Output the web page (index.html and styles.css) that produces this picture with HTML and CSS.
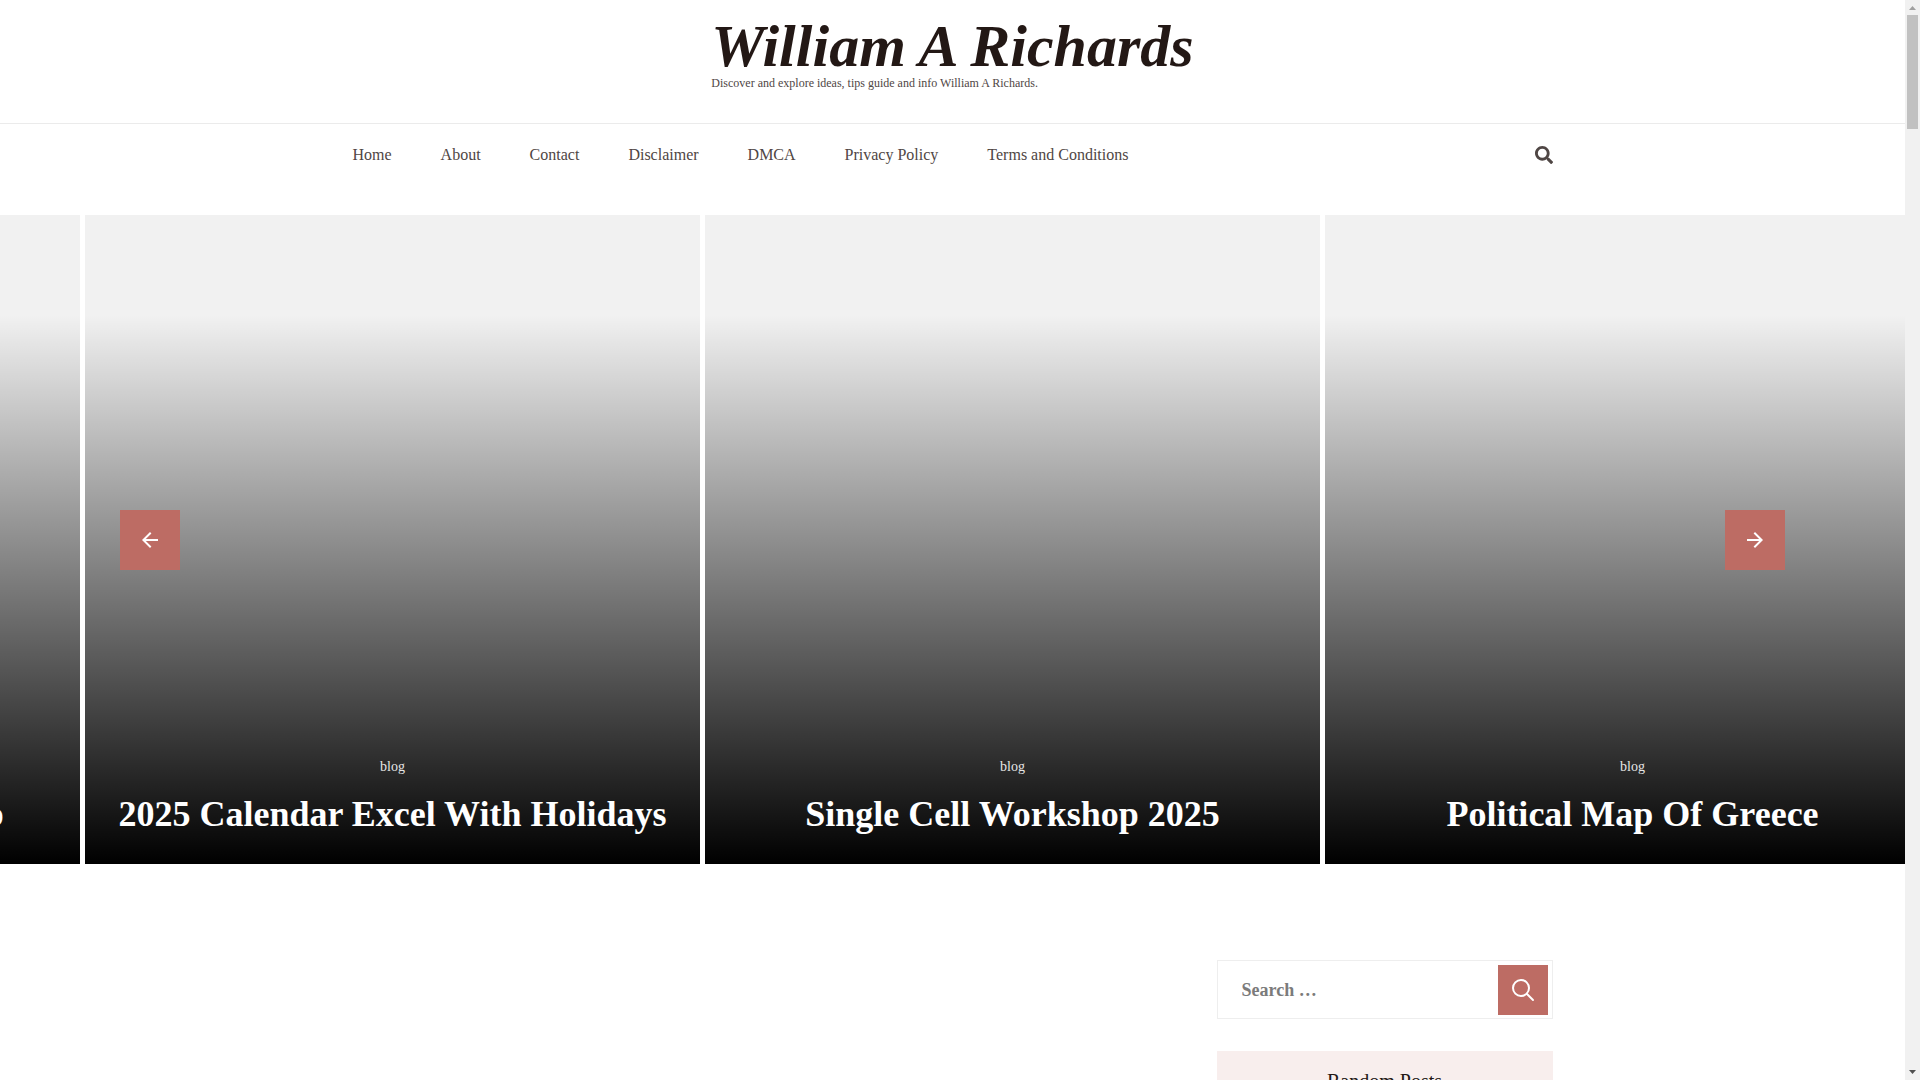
FILE: index.html
```html
<!DOCTYPE html>
<html lang="en">
<head>
    <meta charset="UTF-8">
    <meta name="viewport" content="width=device-width, initial-scale=1.0">
    <title>William A Richards</title>
    <link rel="stylesheet" href="styles.css">
</head>
<body>
    <div class="page">
        <header class="site-header">
            <div class="branding">
                <h1 class="site-title"><a href="#">William A Richards</a></h1>
                <p class="site-description">Discover and explore ideas, tips guide and info William A Richards.</p>
            </div>
            <div class="nav-bar">
                <div class="container nav-wrap">
                    <nav>
                        <ul class="menu">
                            <li><a href="#">Home</a></li>
                            <li><a href="#">About</a></li>
                            <li><a href="#">Contact</a></li>
                            <li><a href="#">Disclaimer</a></li>
                            <li><a href="#">DMCA</a></li>
                            <li><a href="#">Privacy Policy</a></li>
                            <li><a href="#">Terms and Conditions</a></li>
                        </ul>
                    </nav>
                    <button class="search-toggle" type="button" aria-label="Open search">
                        <svg viewBox="0 0 512 512" width="18" height="18"><path fill="currentColor" d="M505 442.700L405.300 343c-4.500-4.500-10.600-7-17-7H372c27.600-35.300 44-79.700 44-128C416 93.100 322.900 0 208 0S0 93.100 0 208s93.100 208 208 208c48.300 0 92.700-16.400 128-44v16.300c0 6.400 2.500 12.500 7 17l99.700 99.700c9.400 9.400 24.600 9.400 33.900 0l28.300-28.300c9.400-9.400 9.400-24.600.1-34zM208 336c-70.700 0-128-57.200-128-128 0-70.700 57.200-128 128-128 70.700 0 128 57.200 128 128 0 70.700-57.200 128-128 128z"/></svg>
                    </button>
                </div>
            </div>
        </header>

        <section class="banner">
            <div class="slides">
                <article class="slide">
                    <a class="category" href="#">blog</a>
                    <h2><a href="#">Modern Europe Political Map</a></h2>
                </article>
                <article class="slide">
                    <a class="category" href="#">blog</a>
                    <h2><a href="#">2025 Calendar Excel With Holidays</a></h2>
                </article>
                <article class="slide">
                    <a class="category" href="#">blog</a>
                    <h2><a href="#">Single Cell Workshop 2025</a></h2>
                </article>
                <article class="slide">
                    <a class="category" href="#">blog</a>
                    <h2><a href="#">Political Map Of Greece</a></h2>
                </article>
            </div>
            <button class="arrow prev" type="button" aria-label="Previous">
                <svg viewBox="0 0 16 16" width="16" height="16"><path fill="currentColor" d="M16 7H3.830l5.590-5.590L8 0 0 8l8 8 1.410-1.410L3.830 9H16z"/></svg>
            </button>
            <button class="arrow next" type="button" aria-label="Next">
                <svg viewBox="0 0 16 16" width="16" height="16"><path fill="currentColor" d="M8 0L6.590 1.410 12.170 7H0v2h12.170l-5.580 5.590L8 16l8-8z"/></svg>
            </button>
        </section>

        <div class="container content">
            <main></main>
            <aside class="sidebar">
                <form class="search-form">
                    <input type="search" placeholder="Search …" aria-label="Search for">
                    <button type="submit" aria-label="Search">
                        <svg viewBox="0 0 24 24" width="24" height="24"><g fill="none" stroke="currentColor" stroke-width="2" stroke-linecap="round"><circle cx="10" cy="10" r="8"/><path d="M16 16L22 22"/></g></svg>
                    </button>
                </form>
                <section class="widget">
                    <h2 class="widget-title">Random Posts</h2>
                </section>
            </aside>
        </div>
    </div>

    <div class="scrollbar">
        <svg viewBox="0 0 7 4" width="7" height="4"><path fill="#a0a0a0" d="M0 4L3.500 0L7 4z"/></svg>
        <div class="thumb"></div>
        <svg viewBox="0 0 7 4" width="7" height="4"><path fill="#505050" d="M0 0H7L3.500 4z"/></svg>
    </div>
</body>
</html>
```
FILE: styles.css
```css
*{
    margin: 0;
    padding: 0;
    box-sizing: border-box;
}

body{
    display: flex;
    height: 100vh;
    overflow: hidden;
    background: #fff;
    color: #231815;
    font-family: "Liberation Serif", "Times New Roman", serif;
}

a{
    color: inherit;
    text-decoration: none;
}

button{
    border: none;
    cursor: pointer;
}

svg{
    display: block;
}

.page{
    flex: 1;
    min-width: 0;
    overflow: hidden;
}

.container{
    max-width: 1200px;
    margin: 0 auto;
}

/* header */
.branding{
    width: fit-content;
    margin: 0 auto;
    padding: 16px 0 33px;
}

.site-title{
    font-size: 60px;
    line-height: 60px;
    font-style: italic;
    font-weight: 700;
}

.site-description{
    color: #4f4644;
    font-size: 12px;
    line-height: 14px;
}

.nav-bar{
    border-top: 1px solid #ebebeb;
    padding-bottom: 30px;
}

.nav-wrap{
    display: flex;
    justify-content: space-between;
    align-items: center;
    height: 61px;
    color: #4f4644;
}

.menu{
    display: flex;
    gap: 49px;
    list-style: none;
    font-size: 16px;
    line-height: 20px;
}

.search-toggle{
    background: none;
    color: inherit;
}

/* banner */
.banner{
    position: relative;
    overflow: hidden;
}

.slides{
    display: grid;
    grid-template-columns: repeat(4, 1fr);
    gap: 5px;
    margin: 0 -35px 0 -535px;
}

.slide{
    display: flex;
    flex-direction: column;
    justify-content: flex-end;
    align-items: center;
    min-height: 649px;
    padding: 30px;
    background: linear-gradient(to bottom, transparent 100px, #000 100%), #f1f1f1;
    color: #fff;
    text-align: center;
}

.category{
    margin-bottom: 16px;
    color: #e6e6e6;
    font-size: 14px;
    line-height: 22px;
}

.slide h2{
    font-size: 36px;
    line-height: 40px;
    font-weight: 700;
    white-space: nowrap;
}

.arrow{
    position: absolute;
    top: calc(50% - 30px);
    display: grid;
    place-items: center;
    width: 60px;
    height: 60px;
    background: #bd6c64;
    color: #fff;
}

.prev{
    left: 120px;
}

.next{
    right: 120px;
}

/* content */
.content{
    display: grid;
    grid-template-columns: 1fr 336px;
    padding-top: 96px;
}

.search-form{
    display: flex;
    align-items: center;
    margin-bottom: 32px;
    padding: 4px 4px 3px;
    border: 1px solid #eee;
}

.search-form input{
    flex: 1;
    min-width: 0;
    height: 49px;
    padding: 0 20px;
    border: none;
    outline: none;
    background: none;
    font-family: inherit;
    font-size: 18px;
    font-weight: 700;
}

.search-form input::placeholder{
    color: #7b7b7b;
}

.search-form button{
    display: grid;
    place-items: center;
    width: 50px;
    height: 50px;
    background: #bd6c64;
    color: #fff;
}

.widget-title{
    padding: 16px;
    background: #f8eeed;
    font-size: 20px;
    line-height: 28px;
    font-weight: 400;
    text-align: center;
}

/* scrollbar */
.scrollbar{
    display: flex;
    flex-direction: column;
    align-items: center;
    width: 15px;
    padding: 6px 0;
    background: #f1f1f1;
}

.thumb{
    width: 11px;
    height: 114px;
    margin: 5px 0 auto;
    background: #c1c1c1;
}
```
